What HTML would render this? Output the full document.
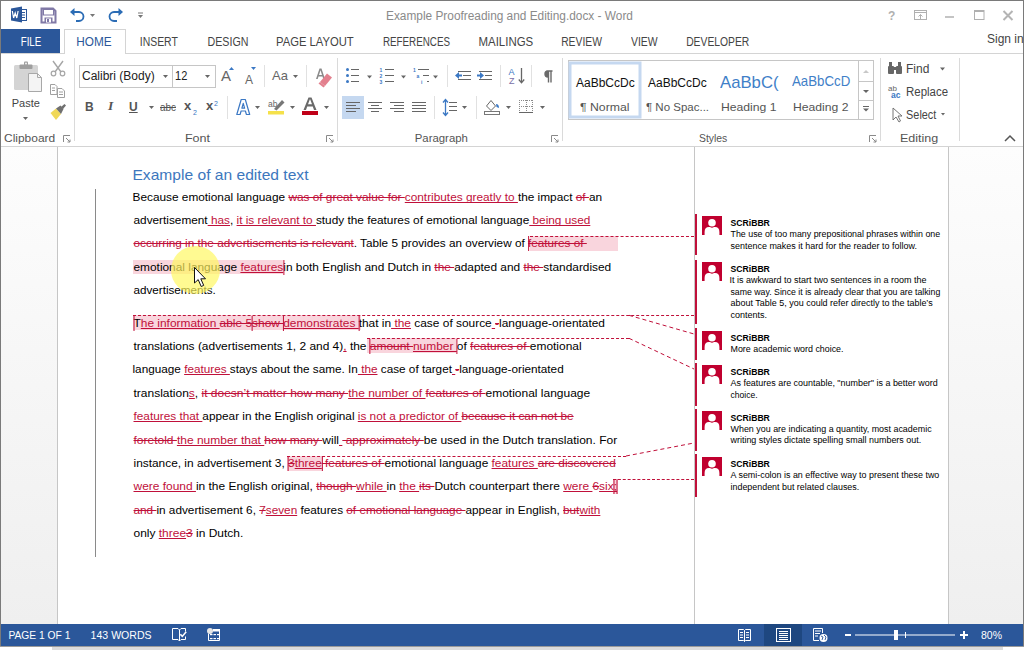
<!DOCTYPE html>
<html><head><meta charset="utf-8">
<style>
*{margin:0;padding:0;box-sizing:border-box}
html,body{width:1024px;height:650px;overflow:hidden;background:#fff;font-family:"Liberation Sans",sans-serif}
.a{position:absolute}
#frame{position:absolute;left:0;top:0;width:1024px;height:646px;border-left:1px solid #7a7a7a;border-top:1px solid #7a7a7a;border-right:1px solid #7a7a7a}
.tab{position:absolute;top:35px;font-size:12px;color:#444;white-space:nowrap;line-height:14px}
.glab{position:absolute;top:131px;font-size:11.5px;color:#555;white-space:nowrap;line-height:14px}
.vsep{position:absolute;width:1px;background:#dadada}
.ln{position:absolute;white-space:pre;font-size:11.8px;line-height:14px;color:#000;transform-origin:0 0;z-index:3}
.ln .d{color:#c0103a;text-decoration:line-through;text-decoration-color:#c0103a}
.ln .i{color:#c0103a;text-decoration:underline;text-decoration-skip-ink:none;text-decoration-color:#c0103a;text-underline-offset:1px}
.br{display:inline-block;width:0;height:0;position:relative}.br::before{content:'';position:absolute;left:0;top:-11px;width:1px;height:15px;background:#c0103a}
.pink{position:absolute;background:#f9d5dd;z-index:1}
.dash{position:absolute;height:0;border-top:1px dashed #c0103a;z-index:2}
.cbar{position:absolute;left:695px;width:2px;background:#c0103a;z-index:4}
.cic{position:absolute;left:702px;width:20px;height:19px;z-index:4}
.cn{position:absolute;left:730px;font-size:9.2px;font-weight:bold;color:#000;white-space:nowrap;line-height:10px;transform-origin:0 0}
.ct{position:absolute;left:730px;font-size:8.4px;color:#000;white-space:nowrap;line-height:10px;transform-origin:0 0}
.rt{white-space:nowrap;line-height:14px;transform-origin:0 0}
.sb{position:absolute;top:628.5px;font-size:11px;color:#fff;white-space:nowrap;line-height:12px}
</style></head><body>
<div id="frame"></div>
<!-- title bar -->
<div class="a" style="transform:translateX(-0.99px) scaleX(0.9880);transform-origin:0 0;left:387px;top:9px;font-size:12px;color:#8a8a8a;white-space:nowrap;line-height:14px" id="title">Example Proofreading and Editing.docx - Word</div>

<!-- tabs -->
<div class="a" style="left:1px;top:29px;width:59px;height:25px;background:#2b579a"></div>
<div class="tab" style="transform:translateX(0.70px) scaleX(0.8120);transform-origin:0 0;left:20px;color:#fff" id="t_file">FILE</div>
<div class="a" style="left:64px;top:29px;width:62px;height:25px;border:1px solid #d4d4d4;border-bottom:none;background:#fff;z-index:2"></div>
<div class="a" style="left:1px;top:53px;width:1022px;height:1px;background:#d4d4d4"></div>
<div class="tab" style="transform:translateX(-0.78px) scaleX(0.9829);transform-origin:0 0;left:77px;color:#2b579a;z-index:3" id="t_home">HOME</div>
<div class="tab" style="transform:translateX(-1.27px) scaleX(0.8698);transform-origin:0 0;left:141px" id="t_ins">INSERT</div>
<div class="tab" style="transform:translateX(-0.49px) scaleX(0.8886);transform-origin:0 0;left:208px" id="t_des">DESIGN</div>
<div class="tab" style="transform:translateX(-0.94px) scaleX(0.9366);transform-origin:0 0;left:277px" id="t_pl">PAGE LAYOUT</div>
<div class="tab" style="transform:translateX(-1.12px) scaleX(0.8185);transform-origin:0 0;left:384px" id="t_ref">REFERENCES</div>
<div class="tab" style="transform:translateX(-0.56px) scaleX(0.9554);transform-origin:0 0;left:479px" id="t_mail">MAILINGS</div>
<div class="tab" style="transform:translateX(-0.86px) scaleX(0.8609);transform-origin:0 0;left:562px" id="t_rev">REVIEW</div>
<div class="tab" style="transform:translateX(0.00px) scaleX(0.8677);transform-origin:0 0;left:631px" id="t_view">VIEW</div>
<div class="tab" style="transform:translateX(-0.86px) scaleX(0.8611);transform-origin:0 0;left:687px" id="t_dev">DEVELOPER</div>
<div class="tab" style="transform:none;transform-origin:0 0;left:987px;top:32px;color:#444" id="t_sign">Sign in</div>

<!-- ribbon -->
<div class="a" style="left:1px;top:146px;width:1022px;height:1px;background:#d4d4d4"></div>
<div class="vsep" style="left:74px;top:58px;height:83px"></div>
<div class="vsep" style="left:337px;top:58px;height:83px"></div>
<div class="vsep" style="left:562px;top:58px;height:83px"></div>
<div class="vsep" style="left:880px;top:58px;height:83px"></div>
<div class="vsep" style="left:959px;top:58px;height:83px"></div>
<div class="glab" style="transform:translateX(0.00px) scaleX(1.0408);transform-origin:0 0;left:4px" id="g_clip">Clipboard</div>
<div class="glab" style="transform:translateX(-1.09px) scaleX(1.0909);transform-origin:0 0;left:186px" id="g_font">Font</div>
<div class="glab" style="transform:translateX(-1.29px) scaleX(0.9904);transform-origin:0 0;left:416px" id="g_para">Paragraph</div>
<div class="glab" style="transform:translateX(0.00px) scaleX(0.9032);transform-origin:0 0;left:699px" id="g_sty">Styles</div>
<div class="glab" style="transform:translateX(-1.09px) scaleX(1.0882);transform-origin:0 0;left:901px" id="g_edit">Editing</div>
<svg class="a" style="left:0;top:0" width="1024" height="150" viewBox="0 0 1024 150">
<!-- QAT: word icon -->
<rect x="18.5" y="9.5" width="8" height="11" fill="#fff" stroke="#2b579a"/>
<line x1="20" y1="12.5" x2="25" y2="12.5" stroke="#2b579a"/><line x1="20" y1="15" x2="25" y2="15" stroke="#2b579a"/><line x1="20" y1="17.5" x2="25" y2="17.5" stroke="#2b579a"/>
<path d="M11 8.5 L22 6.5 V22.5 L11 20.5 Z" fill="#2b579a"/>
<path d="M12.3 11 L13.6 18 L15.2 13 L16.8 18 L18.1 11" fill="none" stroke="#fff" stroke-width="1.2"/>
<!-- save -->
<path d="M41.5 8.5 H53 L55.5 11 V22.5 H41.5 Z" fill="#fff" stroke="#8079a6" stroke-width="2"/>
<rect x="42.5" y="9" width="12" height="6.5" fill="#8079a6"/>
<rect x="44" y="10" width="9" height="4.5" fill="#fff"/>
<rect x="44.5" y="17.5" width="8" height="5" fill="#8079a6"/><rect x="46" y="18.5" width="5" height="4" fill="#fff"/><rect x="47" y="19" width="2" height="3" fill="#8079a6"/>
<!-- undo -->
<path d="M72 12 H79 A4.5 4.5 0 0 1 79 21 H76" fill="none" stroke="#2b6cb5" stroke-width="1.8"/>
<path d="M70 12 L74.5 8 V16 Z" fill="#2b6cb5"/>
<path d="M90 14 H95 L92.5 17 Z" fill="#777"/>
<!-- redo -->
<path d="M121 12 H114 A4.5 4.5 0 0 0 114 21 H117" fill="none" stroke="#2b6cb5" stroke-width="1.8"/>
<path d="M123 12 L118.5 8 V16 Z" fill="#2b6cb5"/>
<!-- customize -->
<line x1="138" y1="13" x2="143" y2="13" stroke="#777"/><path d="M138 15 H143 L140.5 18 Z" fill="#777"/>

<!-- window controls -->
<text x="888" y="20" font-family="Liberation Sans" font-size="12" font-weight="bold" fill="#b0b0b0">?</text>
<rect x="914.5" y="10.5" width="12" height="9" fill="none" stroke="#b0b0b0"/><line x1="914.5" y1="12.5" x2="926.5" y2="12.5" stroke="#b0b0b0"/>
<path d="M920.5 19 V14.5 M918.5 16.5 L920.5 14.5 L922.5 16.5" fill="none" stroke="#b0b0b0"/>
<line x1="945" y1="17" x2="954" y2="17" stroke="#b0b0b0" stroke-width="1.5"/>
<rect x="974.5" y="10.5" width="9.5" height="9" fill="none" stroke="#b0b0b0"/><rect x="974.5" y="10.5" width="9.5" height="1.5" fill="#b0b0b0"/>
<path d="M1003.5 11 L1012.5 20 M1012.5 11 L1003.5 20" stroke="#b4b4b4" stroke-width="2"/>

<!-- Clipboard group -->
<rect x="14" y="65" width="24" height="25" rx="1.5" fill="#d4d4d4"/>
<rect x="19.5" y="64.5" width="13" height="4.5" rx="1" fill="#9e9e9e"/>
<rect x="24" y="61.5" width="4" height="4" rx="1" fill="#9e9e9e"/><rect x="25.2" y="62.7" width="1.6" height="1.6" fill="#fff"/>
<path d="M28.5 73.5 H37.5 L41.5 77.5 V91.5 H28.5 Z" fill="#f4f4f4" stroke="#a8a8a8"/>
<path d="M37.5 73.5 V77.5 H41.5" fill="none" stroke="#a8a8a8"/>
<path d="M23 117 H28 L25.5 120 Z" fill="#666"/>
<!-- scissors -->
<path d="M53 61 L61 72 M63 61 L55 72" stroke="#a6a6a6" stroke-width="1.4"/>
<circle cx="53.5" cy="73.5" r="2.3" fill="none" stroke="#a6a6a6" stroke-width="1.2"/>
<circle cx="62.5" cy="73.5" r="2.3" fill="none" stroke="#a6a6a6" stroke-width="1.2"/>
<!-- copy -->
<path d="M50.5 84.5 H55 L57 86.5 V94.5 H50.5 Z" fill="#fff" stroke="#a0a0a0"/>
<path d="M57.5 88.5 H62 L64.5 91 V97.5 H57.5 Z" fill="#fff" stroke="#a0a0a0"/>
<line x1="52" y1="88" x2="55" y2="88" stroke="#a0a0a0"/><line x1="52" y1="90.5" x2="55" y2="90.5" stroke="#a0a0a0"/>
<line x1="59" y1="92" x2="63" y2="92" stroke="#a0a0a0"/><line x1="59" y1="94.5" x2="63" y2="94.5" stroke="#a0a0a0"/>
<!-- format painter -->
<path d="M50.5 113 L56 108.5 L61 114 L56 120 Z" fill="#f0d858"/>
<path d="M56 108.5 L60.5 105.5 L63.5 109 L61 114 Z" fill="#707070"/>
<path d="M61 107 L64.5 104 L66 105.5 L63 109 Z" fill="#707070"/>
<!-- launcher icons -->
<g fill="none" stroke="#8a8a8a" stroke-width="1">
<path d="M63.5 142 V135.5 H70"/><path d="M66 138 L70 142 M70 139.5 V142 H67.5"/>
<path d="M326.5 142 V135.5 H333"/><path d="M329 138 L333 142 M333 139.5 V142 H330.5"/>
<path d="M551.5 142 V135.5 H558"/><path d="M554 138 L558 142 M558 139.5 V142 H555.5"/>
<path d="M869.5 142 V135.5 H876"/><path d="M872 138 L876 142 M876 139.5 V142 H873.5"/>
</g>
<path d="M1005 141 L1010 136 L1015 141" fill="none" stroke="#555" stroke-width="1.5"/>

<!-- Font group -->
<rect x="79.5" y="65.5" width="93" height="22" fill="#fff" stroke="#c6c6c6"/>
<rect x="172.5" y="65.5" width="43" height="22" fill="#fff" stroke="#c6c6c6"/>
<path d="M163 75 H168 L165.5 78 Z" fill="#666"/>
<path d="M205 75 H210 L207.5 78 Z" fill="#666"/>
<!-- grow/shrink triangles -->
<path d="M229 70 L231.5 67 L234 70 Z" fill="#3b78c4"/>
<path d="M251 67 H256 L253.5 70 Z" fill="#3b78c4"/>
<path d="M293 75 H298 L295.5 78 Z" fill="#666"/>
<!-- clear formatting -->
<path d="M316 79 L319.5 68.5 H321.5 L325 79 H323.3 L322.5 76.5 H318.5 L317.7 79 Z M319 75 H322 L320.5 70.3 Z" fill="#8a8a8a"/>
<path d="M320 82 L327 73.5 L332 77.5 L325 86 Z" fill="#e3808e"/>
<path d="M320 82 L325 86 L323.5 87.5 L318.5 83.5 Z" fill="#e3808e"/>
<!-- separators row -->
<g fill="#e1e1e1">
<rect x="264" y="65" width="1" height="22"/><rect x="306" y="65" width="1" height="22"/>
<rect x="227" y="96" width="1" height="23"/>
<rect x="447" y="65" width="1" height="22"/><rect x="500" y="65" width="1" height="22"/><rect x="531" y="65" width="1" height="22"/>
<rect x="434" y="96" width="1" height="23"/><rect x="476" y="96" width="1" height="23"/>
</g>
<!-- U underline, arrows -->
<path d="M149 106 H154 L151.5 109 Z" fill="#666"/>
<path d="M255 106 H260 L257.5 109 Z" fill="#666"/>
<path d="M290 106 H295 L292.5 109 Z" fill="#666"/>
<path d="M324 106 H329 L326.5 109 Z" fill="#666"/>
<!-- text effects A outline -->
<path d="M236.8 114.5 L241.2 99.5 H245.3 L249.7 114.5 H246.4 L245.4 111 H241.1 L240.1 114.5 Z M241.9 108.2 H244.6 L243.25 103.3 Z" fill="#fff" stroke="#3b78c4" stroke-width="1.2" stroke-linejoin="round"/>
<!-- highlight -->
<rect x="268" y="111" width="16" height="3.5" fill="#f5e14a"/>
<path d="M274 109 L282 100 L284.5 102.5 L276.5 110.5 Z" fill="#777"/>
<text x="268" y="107" font-family="Liberation Sans" font-size="8.5" fill="#666">ab</text>
<!-- font color -->
<rect x="302" y="111" width="16" height="4" fill="#c00018"/>
<path d="M303.5 110 L308.5 97.5 H311.5 L316.5 110 H314 L312.8 106.5 H307.2 L306 110 Z M308 104.3 H312 L310 99 Z" fill="#6a6a6a"/>
<!-- Paragraph group -->
<g fill="#3b78c4"><circle cx="347.5" cy="69.5" r="1.5"/><circle cx="347.5" cy="75.5" r="1.5"/><circle cx="347.5" cy="81.5" r="1.5"/></g>
<g stroke="#666" stroke-width="1"><line x1="351" y1="69.5" x2="359" y2="69.5"/><line x1="351" y1="75.5" x2="359" y2="75.5"/><line x1="351" y1="81.5" x2="359" y2="81.5"/></g>
<path d="M367 75.5 H372 L369.5 78.5 Z" fill="#666"/>
<g font-family="Liberation Sans" font-size="5" font-weight="bold" fill="#3b78c4"><text x="379.5" y="72">1</text><text x="379.5" y="78">2</text><text x="379.5" y="84">3</text></g>
<g stroke="#666" stroke-width="1"><line x1="385" y1="69.5" x2="394" y2="69.5"/><line x1="385" y1="75.5" x2="394" y2="75.5"/><line x1="385" y1="81.5" x2="394" y2="81.5"/></g>
<path d="M401 75.5 H406 L403.5 78.5 Z" fill="#666"/>
<g font-family="Liberation Sans" font-size="5" font-weight="bold" fill="#3b78c4"><text x="413" y="72">1</text><text x="416.5" y="78">a</text><text x="421" y="84">i</text></g>
<g stroke="#666" stroke-width="1"><line x1="418" y1="69.5" x2="429" y2="69.5"/><line x1="423" y1="75.5" x2="429" y2="75.5"/><line x1="427" y1="81.5" x2="429" y2="81.5"/></g>
<path d="M433 75.5 H438 L435.5 78.5 Z" fill="#666"/>
<!-- indent -->
<g stroke="#666" stroke-width="1"><line x1="458" y1="71.5" x2="471" y2="71.5"/><line x1="463" y1="75.5" x2="471" y2="75.5"/><line x1="458" y1="79.5" x2="471" y2="79.5"/>
<line x1="479" y1="71.5" x2="492" y2="71.5"/><line x1="485" y1="75.5" x2="492" y2="75.5"/><line x1="479" y1="79.5" x2="492" y2="79.5"/></g>
<path d="M455 75.5 L459 72 V74.5 H462 V76.5 H459 V79 Z" fill="#3b78c4"/>
<path d="M484 75.5 L480 72 V74.5 H477 V76.5 H480 V79 Z" fill="#3b78c4"/>
<!-- sort -->
<text x="508.5" y="75" font-family="Liberation Sans" font-size="9" fill="#3b78c4">A</text>
<text x="509" y="83.5" font-family="Liberation Sans" font-size="9" fill="#7a70a8">Z</text>
<path d="M521.5 68 V82.5 M518.8 79.5 L521.5 82.8 L524.2 79.5" fill="none" stroke="#666" stroke-width="1.3"/>
<path d="M546.5 71 H552.5 M548.5 71 V82.5 M551 71 V82.5 M548 71 A3 3 0 0 0 548 77 Z" fill="#6a6a6a" stroke="#6a6a6a" stroke-width="1.4"/>
<!-- align -->
<rect x="342" y="96" width="22" height="23" fill="#c5d8f0"/>
<g stroke="#666" stroke-width="1">
<line x1="346" y1="102.5" x2="360" y2="102.5"/><line x1="346" y1="105.5" x2="356" y2="105.5"/><line x1="346" y1="108.5" x2="360" y2="108.5"/><line x1="346" y1="111.5" x2="356" y2="111.5"/>
<line x1="368" y1="102.5" x2="382" y2="102.5"/><line x1="371" y1="105.5" x2="379" y2="105.5"/><line x1="368" y1="108.5" x2="382" y2="108.5"/><line x1="371" y1="111.5" x2="379" y2="111.5"/>
<line x1="390" y1="102.5" x2="404" y2="102.5"/><line x1="394" y1="105.5" x2="404" y2="105.5"/><line x1="390" y1="108.5" x2="404" y2="108.5"/><line x1="394" y1="111.5" x2="404" y2="111.5"/>
<line x1="412" y1="102.5" x2="426" y2="102.5"/><line x1="412" y1="105.5" x2="426" y2="105.5"/><line x1="412" y1="108.5" x2="426" y2="108.5"/><line x1="412" y1="111.5" x2="426" y2="111.5"/>
<line x1="449" y1="102.5" x2="457" y2="102.5"/><line x1="449" y1="106.5" x2="457" y2="106.5"/><line x1="449" y1="110.5" x2="457" y2="110.5"/>
</g>
<path d="M445.5 100 V115 M443 102.5 L445.5 99.5 L448 102.5 M443 112.5 L445.5 115.5 L448 112.5" fill="none" stroke="#3b78c4" stroke-width="1.3"/>
<path d="M462 106 H467 L464.5 109 Z" fill="#666"/>
<!-- shading -->
<path d="M486.5 106 L491 100.5 L495.5 106 L491 110.5 Z" fill="#fff" stroke="#666"/>
<path d="M496 104 Q499 104 499 108 L496.5 107 Z" fill="#3b78c4"/>
<rect x="484.5" y="111.5" width="15" height="3" fill="#fff" stroke="#777"/>
<path d="M506 106 H511 L508.5 109 Z" fill="#666"/>
<!-- borders -->
<g stroke="#8a8a8a" stroke-width="1" stroke-dasharray="1 1" fill="none"><path d="M519 100.5 H533 M519 106.5 H533 M519.5 100 V113 M526.5 100 V113 M532.5 100 V113"/></g>
<line x1="519" y1="112.5" x2="533" y2="112.5" stroke="#666" stroke-width="1"/>
<path d="M540 106 H545 L542.5 109 Z" fill="#666"/>
<!-- Styles gallery -->
<rect x="568.5" y="60.5" width="305" height="59" fill="#fff" stroke="#c6c6c6"/>
<rect x="570" y="63" width="70" height="54" fill="none" stroke="#c5d8f0" stroke-width="3"/>
<line x1="858.5" y1="60.5" x2="858.5" y2="119.5" stroke="#c6c6c6"/>
<line x1="858.5" y1="81.5" x2="873.5" y2="81.5" stroke="#c6c6c6"/>
<line x1="858.5" y1="100.5" x2="873.5" y2="100.5" stroke="#c6c6c6"/>
<path d="M863 73 L866 70 L869 73 Z" fill="#c8c8c8"/>
<path d="M863 90 H869 L866 93 Z" fill="#666"/>
<line x1="863" y1="106.5" x2="869" y2="106.5" stroke="#666"/><path d="M863 108.5 H869 L866 111.5 Z" fill="#666"/>

<!-- Editing -->
<g fill="#666">
<rect x="888" y="66" width="6" height="8" rx="1"/><rect x="896" y="66" width="6" height="8" rx="1"/>
<rect x="889" y="62" width="3" height="5"/><rect x="898" y="62" width="3" height="5"/><rect x="893" y="67" width="4" height="3"/>
</g>
<path d="M940 67.5 H945 L942.5 70.5 Z" fill="#666"/>
<text x="888" y="91" font-family="Liberation Sans" font-size="8" fill="#666">ab</text>
<text x="891" y="98" font-family="Liberation Sans" font-size="8.5" font-weight="bold" fill="#3b78c4">ac</text>
<path d="M893 108 V120 L896 117 L899 122 L900.5 121 L898 116 L902 116 Z" fill="#fff" stroke="#666" stroke-width="0.9"/>
<path d="M941 113 H945 L943 115.5 Z" fill="#666"/>
</svg>

<!-- ribbon text -->
<div class="a rt" id="r_paste" style="transform:translateX(-0.28px) scaleX(0.9750);transform-origin:0 0;left:12px;top:96px;font-size:11.3px;color:#444">Paste</div>
<div class="a rt" id="r_font" style="transform:translateX(0.00px) scaleX(1.0000);transform-origin:0 0;left:82px;top:69px;font-size:12px;color:#222">Calibri (Body)</div>
<div class="a rt" id="r_size" style="transform:translateX(-0.92px) scaleX(0.9167);transform-origin:0 0;left:176px;top:69px;font-size:12px;color:#222">12</div>
<div class="a rt" style="left:221px;top:69px;font-size:15px;color:#666">A</div>
<div class="a rt" style="left:245px;top:73px;font-size:12px;color:#666">A</div>
<div class="a rt" style="left:272px;top:69px;font-size:13px;color:#666">Aa</div>
<div class="a rt" style="left:85px;top:100px;font-size:12px;font-weight:bold;color:#555">B</div>
<div class="a rt" style="left:108px;top:98.5px;font-size:13.5px;font-style:italic;font-weight:bold;color:#555;font-family:'Liberation Serif'">I</div>
<div class="a rt" style="left:129px;top:99.5px;font-size:12px;font-weight:bold;color:#555;text-decoration:underline">U</div>
<div class="a rt" style="left:160px;top:100px;font-size:11px;color:#555;text-decoration:line-through;transform:scaleX(0.9);transform-origin:0 0">abc</div>
<div class="a rt" style="left:184px;top:99px;font-size:13px;font-weight:bold;color:#555">x</div>
<div class="a rt" style="left:193px;top:106px;font-size:7px;color:#3b78c4">2</div>
<div class="a rt" style="left:206px;top:99px;font-size:13px;font-weight:bold;color:#555">x</div>
<div class="a rt" style="left:214px;top:97px;font-size:7px;color:#3b78c4">2</div>
<div class="a rt" id="r_s1" style="transform:translateX(0.00px) scaleX(1.0000);transform-origin:0 0;left:576px;top:76px;font-size:12px;color:#111">AaBbCcDc</div>
<div class="a rt" id="r_s1l" style="transform:translateX(0.00px) scaleX(1.0652);transform-origin:0 0;left:580px;top:100px;font-size:11.5px;color:#555">¶ Normal</div>
<div class="a rt" id="r_s2" style="transform:translateX(0.00px) scaleX(1.0000);transform-origin:0 0;left:648px;top:76px;font-size:12px;color:#111">AaBbCcDc</div>
<div class="a rt" id="r_s2l" style="transform:translateX(0.00px) scaleX(1.0000);transform-origin:0 0;left:646px;top:100px;font-size:11.5px;color:#555">¶ No Spac...</div>
<div class="a rt" id="r_s3" style="transform:translateX(0.00px) scaleX(0.9831);transform-origin:0 0;left:720px;top:75.5px;font-size:17px;color:#3f7fc8">AaBbC(</div>
<div class="a rt" id="r_s3l" style="transform:translateX(-1.06px) scaleX(1.0588);transform-origin:0 0;left:722px;top:100px;font-size:11.5px;color:#555">Heading 1</div>
<div class="a rt" id="r_s4" style="transform:translateX(0.00px) scaleX(0.9143);transform-origin:0 0;left:792px;top:74px;font-size:14.5px;color:#3f7fc8">AaBbCcD</div>
<div class="a rt" id="r_s4l" style="transform:translateX(-1.06px) scaleX(1.0588);transform-origin:0 0;left:794px;top:100px;font-size:11.5px;color:#555">Heading 2</div>
<div class="a rt" id="r_find" style="transform:translateX(-1.00px) scaleX(1.0000);transform-origin:0 0;left:907px;top:62px;font-size:12px;color:#444">Find</div>
<div class="a rt" id="r_repl" style="transform:translateX(-0.95px) scaleX(0.9535);transform-origin:0 0;left:907px;top:85px;font-size:12px;color:#444">Replace</div>
<div class="a rt" id="r_sel" style="transform:translateX(-0.91px) scaleX(0.9062);transform-origin:0 0;left:907px;top:108px;font-size:12px;color:#444">Select</div>


<!-- document area -->
<div class="a" style="left:1px;top:147px;width:56px;height:477px;background:linear-gradient(#fdfdfd,#efefef)"></div>
<div class="a" style="left:57px;top:147px;width:1px;height:477px;background:#c6c6c6"></div>
<div class="a" style="left:694px;top:147px;width:1px;height:477px;background:#c6c6c6"></div>
<div class="a" style="left:948px;top:147px;width:1px;height:477px;background:#c6c6c6"></div>
<div class="a" style="left:949px;top:147px;width:74px;height:477px;background:linear-gradient(#fdfdfd,#efefef)"></div>
<div class="a" style="left:95px;top:189px;width:1px;height:368px;background:#8a8a8a"></div>

<div class="a" id="h1" style="left:133px;top:166px;font-size:15px;line-height:18px;color:#3d77bd;white-space:nowrap;transform-origin:0 0;transform:translateX(-0.54px) scaleX(1.0399)">Example of an edited text</div>
<div class="pink" style="left:530.3px;top:236.3px;width:87.6px;height:14.5px"></div>
<div class="pink" style="left:133.0px;top:259.5px;width:150.4px;height:14.5px"></div>
<div class="pink" style="left:133.3px;top:315.3px;width:227.5px;height:14.3px"></div>
<div class="pink" style="left:367.0px;top:338.3px;width:88.7px;height:14.7px"></div>
<div class="pink" style="left:287.0px;top:456.0px;width:36.0px;height:14.5px"></div>
<div class="pink" style="left:613.0px;top:479.5px;width:5.0px;height:14.5px"></div>
<div class="dash" style="left:530.3px;top:235.8px;width:163.7px"></div>
<div class="dash" style="left:133.3px;top:314.8px;width:560.7px"></div>
<div class="dash" style="left:367.0px;top:337.8px;width:262.0px"></div>
<div class="dash" style="left:287.0px;top:455.5px;width:339.0px"></div>
<div class="dash" style="left:613.0px;top:479.0px;width:81.0px"></div>
<svg class="a" style="left:0;top:0;z-index:2" width="1024" height="650"><line x1="629.0" y1="315.3" x2="694.0" y2="334.0" stroke="#c0103a" stroke-width="1" stroke-dasharray="4 3"/><line x1="629.0" y1="338.3" x2="694.0" y2="369.0" stroke="#c0103a" stroke-width="1" stroke-dasharray="4 3"/><line x1="626.0" y1="456.0" x2="694.0" y2="443.0" stroke="#c0103a" stroke-width="1" stroke-dasharray="4 3"/></svg>
<div class="ln" id="p1l0" style="left:133.0px;top:189.60px;transform:translateX(-0.50px) scaleX(1.0028)">Because emotional language <span class="d">was of great value for </span><span class="i">contributes greatly to </span>the impact <span class="d">of </span>an</div>
<div class="ln" id="p1l1" style="left:133.0px;top:213.00px;transform:translateX(0.50px) scaleX(1.0007)">advertisement<span class="i"> has</span>, <span class="i">it is relevant to </span>study the features of emotional language<span class="i"> being used</span></div>
<div class="ln" id="p1l2" style="left:133.0px;top:236.40px;transform:translateX(0.50px) scaleX(0.9965)"><span class="d">occurring in the advertisements is relevant</span>. Table 5 provides an overview of <span class="br"></span><span class="d">features of </span></div>
<div class="ln" id="p1l3" style="left:133.0px;top:259.80px;transform:translateX(0.50px) scaleX(1.0059)">emotional language <span class="i">features</span><span class="br"></span>in both English and Dutch in <span class="d">the </span>adapted and <span class="d">the </span>standardised</div>
<div class="ln" id="p1l4" style="left:133.0px;top:283.20px;transform:translateX(0.50px) scaleX(0.9878)">advertisements.</div>
<div class="ln" id="p2l0" style="left:133.0px;top:315.60px;transform:translateX(0.50px) scaleX(1.0096)"><span class="br"></span>T<span class="i">he information </span><span class="d">able 5</span><span class="br"></span><span class="d">show </span><span class="br"></span><span class="i">demonstrates </span><span class="br"></span>that in<span class="i"> the</span> case of source<span class="i"> </span><span class="d">-</span>language-orientated</div>
<div class="ln" id="p2l1" style="left:133.0px;top:339.00px;transform:translateX(0.50px) scaleX(1.0122)">translations (advertisements 1, 2 and 4)<span class="i">,</span> the <span class="br"></span><span class="d">amount </span><span class="i">number </span><span class="br"></span>of <span class="d">features of </span>emotional</div>
<div class="ln" id="p2l2" style="left:133.0px;top:362.40px;transform:translateX(-0.50px) scaleX(0.9961)">language <span class="i">features </span>stays about the same. In<span class="i"> the</span> case of target<span class="i"> </span><span class="d">-</span>language-orientated</div>
<div class="ln" id="p2l3" style="left:133.0px;top:385.80px;transform:translateX(0.50px) scaleX(1.0165)">translation<span class="i">s</span>, <span class="d">it doesn’t matter how many </span><span class="i">the number of </span><span class="d">features of </span>emotional language</div>
<div class="ln" id="p2l4" style="left:133.0px;top:409.20px;transform:translateX(0.50px) scaleX(1.0000)"><span class="i">features that </span>appear in the English original <span class="i">is not a predictor of </span><span class="d">because it can not be</span></div>
<div class="ln" id="p2l5" style="left:133.0px;top:432.60px;transform:translateX(0.50px) scaleX(1.0173)"><span class="d">foretold </span><span class="i">the number that </span><span class="d">how many </span>will<span class="i"> </span><span class="d"> approximately </span>be used in the Dutch translation. For</div>
<div class="ln" id="p2l6" style="left:133.0px;top:456.00px;transform:translateX(0.50px) scaleX(1.0073)">instance, in advertisement 3, <span class="br"></span><span class="d">3</span><span class="i">three</span><span class="br"></span><span class="d"> features of </span>emotional language <span class="i">features </span><span class="d">are discovered</span></div>
<div class="ln" id="p2l7" style="left:133.0px;top:479.40px;transform:translateX(0.50px) scaleX(1.0126)"><span class="i">were found </span>in the English original, <span class="d">though </span><span class="i">while </span>in <span class="i">the </span><span class="d">its </span>Dutch counterpart there <span class="i">were </span><span class="d">6</span><span class="i">six</span><span class="br"></span><span class="i">;</span><span class="br"></span></div>
<div class="ln" id="p2l8" style="left:133.0px;top:502.80px;transform:translateX(0.50px) scaleX(0.9983)"><span class="d">and </span>in advertisement 6, <span class="d">7</span><span class="i">seven</span> features <span class="d">of emotional language </span>appear in English, <span class="d">but</span><span class="i">with</span></div>
<div class="ln" id="p2l9" style="left:133.0px;top:526.20px;transform:translateX(0.50px) scaleX(1.0140)">only <span class="i">three</span><span class="d">3</span> in Dutch.</div>
<div class="cbar" style="top:213.5px;height:41.9px"></div>
<svg class="cic" style="top:215.8px" width="20" height="19" viewBox="0 0 20 19"><rect width="20" height="19" fill="#c0002f"/><circle cx="10" cy="6.7" r="3.8" fill="#fff"/><path d="M2.6 19 V16 Q2.6 11 7 11 L8 11 Q10 12.4 12 11 L13 11 Q17.4 11 17.4 16 V19 Z" fill="#fff"/></svg>
<div class="cn" id="cn0" style="top:217.8px;transform:translateX(0.50px) scaleX(0.9405)">SCRiBBR</div>
<div class="ct" id="ct0_0" style="top:229.0px;transform:translateX(0.50px) scaleX(1.0571)">The use of too many prepositional phrases within one</div>
<div class="ct" id="ct0_1" style="top:240.6px;transform:translateX(0.50px) scaleX(1.0705)">sentence makes it hard for the reader to follow.</div>
<div class="cbar" style="top:259.6px;height:64.4px"></div>
<svg class="cic" style="top:262.0px" width="20" height="19" viewBox="0 0 20 19"><rect width="20" height="19" fill="#c0002f"/><circle cx="10" cy="6.7" r="3.8" fill="#fff"/><path d="M2.6 19 V16 Q2.6 11 7 11 L8 11 Q10 12.4 12 11 L13 11 Q17.4 11 17.4 16 V19 Z" fill="#fff"/></svg>
<div class="cn" id="cn1" style="top:264.0px;transform:translateX(0.50px) scaleX(0.9405)">SCRiBBR</div>
<div class="ct" id="ct1_0" style="top:275.2px;transform:translateX(-0.57px) scaleX(1.0742)">It is awkward to start two sentences in a room the</div>
<div class="ct" id="ct1_1" style="top:286.8px;transform:translateX(0.50px) scaleX(1.0438)">same way. Since it is already clear that you are talking</div>
<div class="ct" id="ct1_2" style="top:298.4px;transform:translateX(0.50px) scaleX(1.0714)">about Table 5, you could refer directly to the table’s</div>
<div class="ct" id="ct1_3" style="top:310.0px;transform:translateX(0.50px) scaleX(1.0758)">contents.</div>
<div class="cbar" style="top:327.7px;height:32.3px"></div>
<svg class="cic" style="top:330.8px" width="20" height="19" viewBox="0 0 20 19"><rect width="20" height="19" fill="#c0002f"/><circle cx="10" cy="6.7" r="3.8" fill="#fff"/><path d="M2.6 19 V16 Q2.6 11 7 11 L8 11 Q10 12.4 12 11 L13 11 Q17.4 11 17.4 16 V19 Z" fill="#fff"/></svg>
<div class="cn" id="cn2" style="top:332.8px;transform:translateX(0.50px) scaleX(0.9405)">SCRiBBR</div>
<div class="ct" id="ct2_0" style="top:344.0px;transform:translateX(0.50px) scaleX(1.0604)">More academic word choice.</div>
<div class="cbar" style="top:363.0px;height:43.0px"></div>
<svg class="cic" style="top:364.8px" width="20" height="19" viewBox="0 0 20 19"><rect width="20" height="19" fill="#c0002f"/><circle cx="10" cy="6.7" r="3.8" fill="#fff"/><path d="M2.6 19 V16 Q2.6 11 7 11 L8 11 Q10 12.4 12 11 L13 11 Q17.4 11 17.4 16 V19 Z" fill="#fff"/></svg>
<div class="cn" id="cn3" style="top:366.8px;transform:translateX(0.50px) scaleX(0.9405)">SCRiBBR</div>
<div class="ct" id="ct3_0" style="top:378.0px;transform:translateX(0.50px) scaleX(1.0675)">As features are countable, "number" is a better word</div>
<div class="ct" id="ct3_1" style="top:389.6px;transform:translateX(0.50px) scaleX(1.0192)">choice.</div>
<div class="cbar" style="top:409.0px;height:41.8px"></div>
<svg class="cic" style="top:410.6px" width="20" height="19" viewBox="0 0 20 19"><rect width="20" height="19" fill="#c0002f"/><circle cx="10" cy="6.7" r="3.8" fill="#fff"/><path d="M2.6 19 V16 Q2.6 11 7 11 L8 11 Q10 12.4 12 11 L13 11 Q17.4 11 17.4 16 V19 Z" fill="#fff"/></svg>
<div class="cn" id="cn4" style="top:412.6px;transform:translateX(0.50px) scaleX(0.9405)">SCRiBBR</div>
<div class="ct" id="ct4_0" style="top:423.8px;transform:translateX(0.50px) scaleX(1.0649)">When you are indicating a quantity, most academic</div>
<div class="ct" id="ct4_1" style="top:435.4px;transform:translateX(0.50px) scaleX(1.0669)">writing styles dictate spelling small numbers out.</div>
<div class="cbar" style="top:453.8px;height:43.2px"></div>
<svg class="cic" style="top:456.8px" width="20" height="19" viewBox="0 0 20 19"><rect width="20" height="19" fill="#c0002f"/><circle cx="10" cy="6.7" r="3.8" fill="#fff"/><path d="M2.6 19 V16 Q2.6 11 7 11 L8 11 Q10 12.4 12 11 L13 11 Q17.4 11 17.4 16 V19 Z" fill="#fff"/></svg>
<div class="cn" id="cn5" style="top:458.8px;transform:translateX(0.50px) scaleX(0.9405)">SCRiBBR</div>
<div class="ct" id="ct5_0" style="top:470.0px;transform:translateX(0.50px) scaleX(1.0638)">A semi-colon is an effective way to present these two</div>
<div class="ct" id="ct5_1" style="top:481.6px;transform:translateX(0.50px) scaleX(1.0633)">independent but related clauses.</div>
<div class="a" style="left:171px;top:246px;width:49px;height:48px;border-radius:50%;background:rgba(255,248,95,0.68);z-index:6"></div>
<svg class="a" style="left:194px;top:267px;z-index:7" width="14" height="22" viewBox="0 0 14 22"><path d="M0.5 0.5 V16 L4.2 12.6 L7.2 19.5 L9.7 18.4 L6.8 11.8 H11.5 Z" fill="#fff" stroke="#111" stroke-width="1"/></svg>


<!-- status bar -->
<div class="a" style="left:1px;top:624px;width:1022px;height:22px;background:#2b579a"></div>
<div class="a" style="left:0;top:646px;width:1024px;height:4px;background:#fff"></div>
<div class="a" style="left:0;top:646px;width:1024px;height:1px;background:#9a9a9a"></div>
<div class="a" style="left:52px;top:647px;width:951px;height:3px;background:#dcdcdc"></div>
<div class="sb" style="transform:translateX(0.40px) scaleX(0.9333);transform-origin:0 0;left:8px" id="s_page">PAGE 1 OF 1</div>
<div class="sb" style="transform:translateX(-0.40px) scaleX(0.9594);transform-origin:0 0;left:91px" id="s_words">143 WORDS</div>
<div class="sb" style="transform:translateX(0.00px) scaleX(0.9545);transform-origin:0 0;left:981px" id="s_zoom">80%</div>
<svg class="a" style="left:0;top:620px;z-index:5" width="1024" height="30" viewBox="0 620 1024 30">
<!-- proofing book -->
<path d="M172.5 628.5 H178 L179.5 630 V641 L178 639.5 H172.5 Z" fill="none" stroke="#fff"/>
<path d="M179.5 630 L181 628.5 H185.5 V631.5 M185.5 636.5 V639.5 H181 L179.5 641" fill="none" stroke="#fff"/>
<path d="M180.3 634.2 L182.3 636.4 L186.2 631.8" fill="none" stroke="#fff" stroke-width="1.6"/>
<!-- macro -->
<path d="M213.5 629.5 H219.5 V640.5 H208.5 V633.5" fill="none" stroke="#fff"/>
<rect x="213" y="629" width="7" height="2.5" fill="#fff"/>
<circle cx="210" cy="631" r="3" fill="#e6e6e6"/>
<g fill="#fff"><rect x="210" y="634" width="2.5" height="1.2"/><rect x="213.5" y="634" width="2.5" height="1.2"/><rect x="217" y="634" width="2" height="1.2"/>
<rect x="210" y="638" width="2.5" height="1.2"/><rect x="213.5" y="638" width="2.5" height="1.2"/><rect x="217" y="638" width="2" height="1.2"/></g>
<!-- read mode -->
<path d="M738.5 629.5 H743.5 L744.5 630.5 L745.5 629.5 H750.5 V640.5 H745.5 L744.5 641.5 L743.5 640.5 H738.5 Z M744.5 630.5 V641.5" fill="none" stroke="#fff"/>
<g stroke="#fff"><line x1="740" y1="632.5" x2="743" y2="632.5"/><line x1="740" y1="635" x2="743" y2="635"/><line x1="740" y1="637.5" x2="743" y2="637.5"/><line x1="746" y1="632.5" x2="749" y2="632.5"/><line x1="746" y1="635" x2="749" y2="635"/><line x1="746" y1="637.5" x2="749" y2="637.5"/></g>
<!-- print layout (selected) -->
<rect x="764" y="624" width="38" height="22" fill="#1e4780"/>
<rect x="776.5" y="628.5" width="14" height="13" fill="none" stroke="#fff"/>
<g stroke="#fff"><line x1="779" y1="631.5" x2="788" y2="631.5"/><line x1="779" y1="633.5" x2="788" y2="633.5"/><line x1="779" y1="635.5" x2="788" y2="635.5"/><line x1="779" y1="637.5" x2="788" y2="637.5"/><line x1="779" y1="639.5" x2="788" y2="639.5"/></g>
<!-- web layout -->
<path d="M813.5 628.5 H822.5 V633 M813.5 628.5 V640.5 H819" fill="none" stroke="#fff"/>
<g stroke="#fff"><line x1="815" y1="631" x2="821" y2="631"/><line x1="815" y1="633.5" x2="820" y2="633.5"/><line x1="815" y1="636" x2="818" y2="636"/></g>
<circle cx="823.5" cy="638" r="4" fill="#fff"/><path d="M821 636 L823 637 L822 640 M824 635 L826 637 L825 640" stroke="#2b579a" stroke-width="0.9" fill="none"/>
<!-- zoom -->
<rect x="845" y="634" width="6" height="2" fill="#fff"/>
<rect x="855" y="634.5" width="100" height="1" fill="#fff"/>
<rect x="894" y="630" width="4" height="10" fill="#fff"/>
<rect x="905" y="632" width="1" height="6" fill="#fff"/>
<rect x="960" y="634" width="8" height="2" fill="#fff"/><rect x="963" y="631" width="2" height="8" fill="#fff"/>
</svg>

</body></html>
